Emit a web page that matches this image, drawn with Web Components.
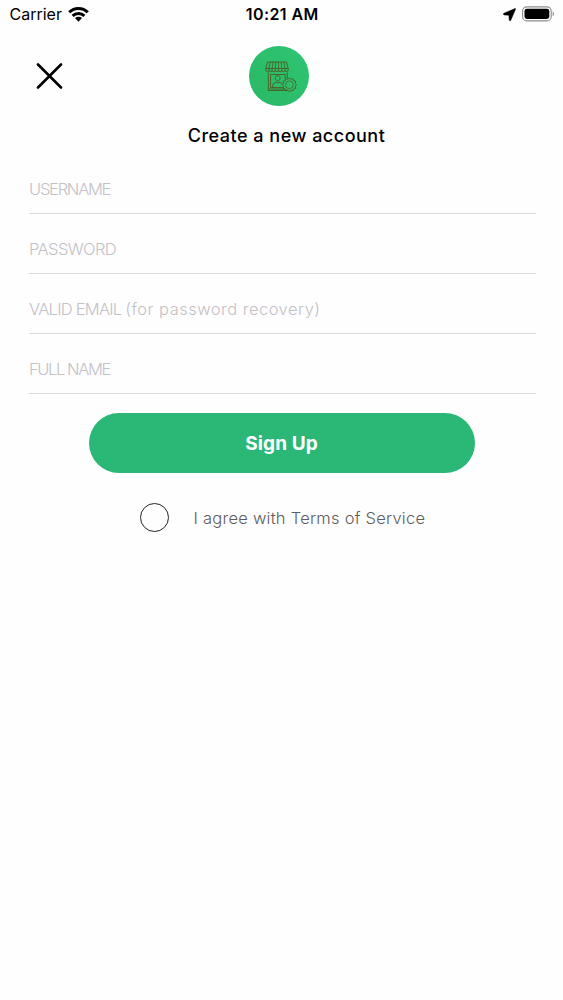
<!DOCTYPE html>
<html lang="en">
<head>
<meta charset="utf-8">
<title>Create a new account</title>
<style>
  body {
    margin: 0;
    background: #fefefe;
    color: #000;
    font-family: Inter, "Liberation Sans", sans-serif;
  }
</style>
</head>
<body>

<template id="status-bar">
  <style>
    :host {
      display: grid;
      grid-template-columns: 1fr auto 1fr;
      align-items: center;
      height: 28px;
      padding: 0 8px 0 9.5px;
      font-size: 16px;
      line-height: 28px;
    }
    .side {
      display: flex;
      align-items: center;
      gap: 6px;
    }
    .right {
      justify-content: flex-end;
      gap: 6px;
    }
    .time {
      font-weight: 600;
      letter-spacing: .4px;
    }
    svg {
      display: block;
    }
  </style>
  <div class="side">
    <slot></slot>
    <svg width="21" height="15" viewBox="0 0 21 15">
      <g fill="none" stroke="#000" stroke-width="2.9">
        <path d="M1.2 5.3a13.2 13.2 0 0 1 18.600 0"/>
        <path d="M4.600 8.900a8.400 8.400 0 0 1 11.800 0"/>
      </g>
      <path d="M7 11.100a5 5 0 0 1 7 0L10.500 14.700z"/>
    </svg>
  </div>
  <div class="time"><slot name="time"></slot></div>
  <div class="side right">
    <svg width="13" height="13" viewBox="0 0 13 13">
      <path d="M11.900.6.900 5.300c-.8.400-.6 1.500.3 1.600l4.700.3.300 4.800c.1.900 1.200 1.100 1.600.3L12.500 1.200c.2-.5-.1-.8-.6-.6z" stroke="#000" stroke-width=".5"/>
    </svg>
    <svg width="33" height="16" viewBox="0 0 33 16">
      <rect x=".6" y=".9" width="28.600" height="14" rx="4.200" fill="none" stroke="#8c8c8c" stroke-width="1.1"/>
      <rect x="2.500" y="2.800" width="24.800" height="10.200" rx="2.400"/>
      <path d="M30.600 5.500c2 .8 2 4 0 4.800z" fill="#999"/>
    </svg>
  </div>
</template>

<template id="sheet-header">
  <style>
    :host {
      display: grid;
      grid-template-columns: 1fr auto 1fr;
      align-items: center;
      height: 60px;
      padding: 18px 29px 0 24px;
    }
    button {
      justify-self: start;
      padding: 12px;
      border: 0;
      background: none;
    }
    svg {
      display: block;
    }
  </style>
  <button aria-label="Close">
    <svg width="27" height="27" viewBox="0 0 27 27">
      <path d="M2 1.500l23 23M25 1.500l-23 23" stroke="#000" stroke-width="2.600" stroke-linecap="round"/>
    </svg>
  </button>
  <slot></slot>
</template>

<template id="shop-logo">
  <style>
    :host {
      display: block;
      width: 60px;
      height: 60px;
      border-radius: 50%;
      background: linear-gradient(45deg, #29b765, #2fc673);
    }
    svg {
      display: block;
    }
  </style>
  <svg width="60" height="60" viewBox="0 0 60 60" fill="none" stroke="#4d5b20" stroke-width=".9" stroke-linejoin="round">
    <!-- awning -->
    <path d="M18.500 16h19l1.700 6.500H16.800z"/>
    <path d="M16.800 22.500v1.600a1.600 1.600 0 0 0 3.200 0 1.600 1.600 0 0 0 3.200 0 1.600 1.600 0 0 0 3.200 0 1.600 1.600 0 0 0 3.200 0 1.600 1.600 0 0 0 3.200 0 1.600 1.600 0 0 0 3.200 0 1.600 1.600 0 0 0 3.200 0v-1.600"/>
    <path d="M21.200 16L20 22.500v1.600M24 16l-.8 6.500v1.600M26.700 16l-.3 6.500v1.600M29.400 16l.2 6.500v1.600M32.100 16l.7 6.500v1.600M34.800 16l1.200 6.500v1.600" stroke-width=".8"/>
    <!-- stall -->
    <path d="M19.300 26.500V44.500h18.500v-1M38.300 26.500v5.500"/>
    <path d="M21.500 41.500V28.500h14.700v5M21.500 41.500h12.500M19.300 43h16.500"/>
    <path d="M28.700 29.600c1.700 0 2.400 1.200 2.400 2.600s-1 2.800-2.400 2.800-2.400-1.400-2.400-2.800.7-2.600 2.400-2.600z"/>
    <path d="M23.700 41.500v-2.600c0-1.500 2-2 3.700-2.700l1.300 1 1.300-1c1.500.6 3 1 3.400 2"/>
    <!-- gear badge -->
    <path d="M40.400 31.900l1.500 1.300 2-.4.800 1.800 1.900.7-.3 2 1.300 1.500-1.300 1.500.3 2-1.900.7-.8 1.800-2-.4-1.500 1.300-1.500-1.300-2 .4-.8-1.800-1.900-.7.300-2-1.300-1.500 1.300-1.500-.3-2 1.900-.7.800-1.800 2 .4z"/>
    <circle cx="40.400" cy="38.800" r="3.900" stroke-width=".7"/>
  </svg>
</template>

<template id="form-field">
  <style>
    :host {
      display: flex;
      align-items: center;
      box-sizing: border-box;
      height: 59.900px;
      padding-top: 11px;
      border-bottom: 1.500px solid #dadada;
      color: #c4c1c6;
      font-size: 16.500px;
      font-weight: 300;
      white-space: pre;
    }
  </style>
  <slot></slot>
</template>

<template id="pill-button">
  <style>
    :host {
      display: block;
    }
    button {
      display: block;
      width: 386px;
      height: 60px;
      margin: 0 auto;
      padding: 1px 0 0;
      border: 0;
      border-radius: 30px;
      background: #2bb877;
      color: #fff;
      font: 700 19px/59px Inter, "Liberation Sans", sans-serif;
      letter-spacing: .1px;
    }
  </style>
  <button><slot></slot></button>
</template>

<template id="round-check">
  <style>
    :host {
      display: flex;
      align-items: center;
      gap: 25px;
      color: #5c5c5c;
      font-size: 16.500px;
      line-height: 30px;
      font-weight: 350;
      letter-spacing: .25px;
      white-space: nowrap;
    }
    .ring {
      box-sizing: border-box;
      width: 29px;
      height: 29px;
      border: 1.300px solid #222;
      border-radius: 50%;
    }
  </style>
  <span class="ring"></span>
  <slot></slot>
</template>

<template id="signup-screen">
  <style>
    :host {
      display: block;
      min-height: 1000px;
    }
    h1 {
      margin: 18px 0 0 10px;
      font-size: 18px;
      line-height: 24px;
      font-weight: 500;
      text-align: center;
      letter-spacing: .5px;
    }
    .fields {
      padding: 6px 27.500px 0 29px;
    }
    .fields form-field:nth-child(1) { letter-spacing: -1.250px; }
    .fields form-field:nth-child(2) { letter-spacing: -.600px; }
    .fields form-field:nth-child(3) { letter-spacing: -.750px; }
    .fields form-field:nth-child(4) { letter-spacing: -1.400px; }
    .note {
      letter-spacing: .480px;
    }
    pill-button {
      margin-top: 19px;
    }
    round-check {
      margin: 30px 0 0 139.500px;
    }
  </style>
  <status-bar>Carrier<span slot="time">10:21 AM</span></status-bar>
  <sheet-header><shop-logo></shop-logo></sheet-header>
  <h1>Create a new account</h1>
  <div class="fields">
    <form-field>USERNAME</form-field>
    <form-field>PASSWORD</form-field>
    <form-field><span>VALID EMAIL <span class="note">(for password recovery)</span></span></form-field>
    <form-field>FULL NAME</form-field>
  </div>
  <pill-button>Sign Up</pill-button>
  <round-check>I agree with Terms of Service</round-check>
</template>

<signup-screen></signup-screen>

<script>
  class TemplateElement extends HTMLElement {
    constructor() {
      super();

      this.shadow = this.attachShadow({ mode: 'open' });
      const content = document.getElementById(this.localName).content.cloneNode(true);
      this.shadow.appendChild(content);
    }
  }

  customElements.define('status-bar', class StatusBar extends TemplateElement {});
  customElements.define('sheet-header', class SheetHeader extends TemplateElement {});
  customElements.define('shop-logo', class ShopLogo extends TemplateElement {});
  customElements.define('form-field', class FormField extends TemplateElement {});
  customElements.define('pill-button', class PillButton extends TemplateElement {});
  customElements.define('round-check', class RoundCheck extends TemplateElement {});
  customElements.define('signup-screen', class SignupScreen extends TemplateElement {});
</script>
</body>
</html>
